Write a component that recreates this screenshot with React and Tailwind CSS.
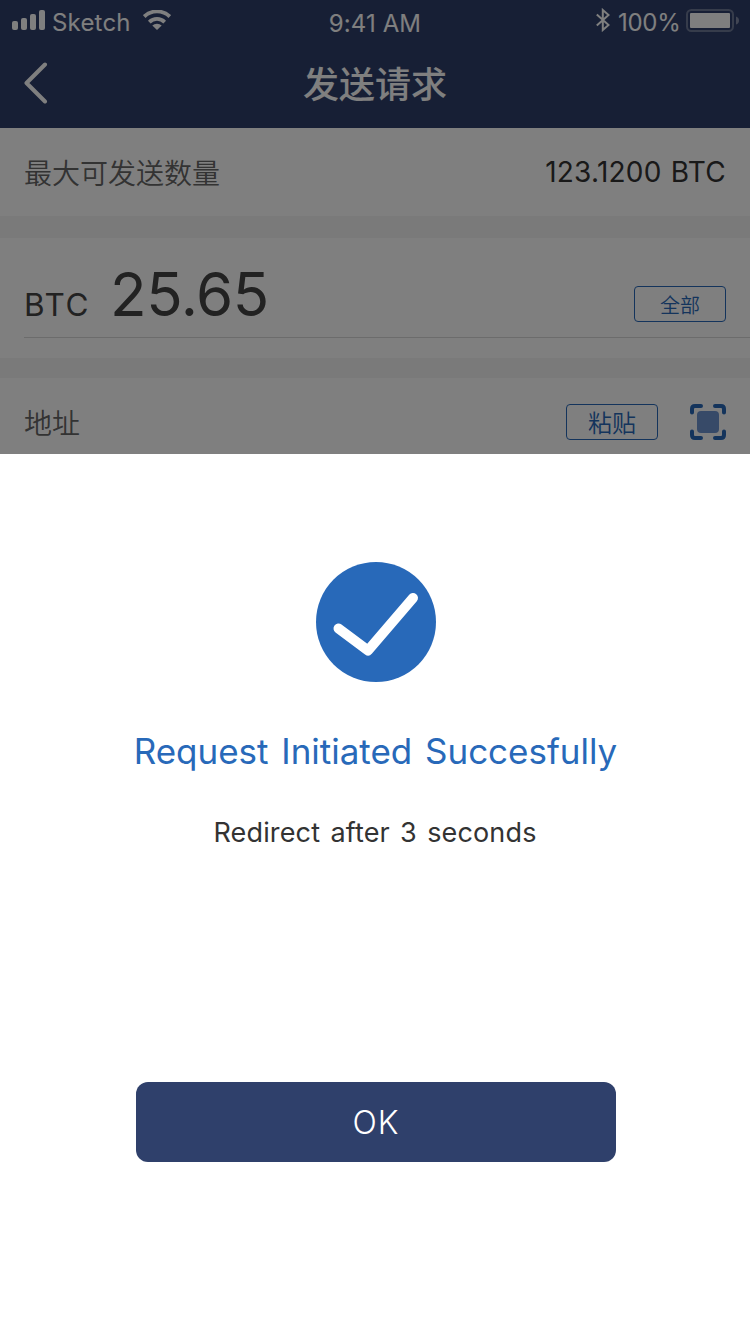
import React from "react";

const latin = "font-['Inter','Noto_Sans_CJK_SC',sans-serif]";
const cjk = "font-['Noto_Sans_CJK_SC',sans-serif]";

function StatusBar() {
  return (
    <div className="relative flex h-10 items-start text-white">
      <svg className="mt-[10px] ml-3 shrink-0" width="33" height="20" viewBox="0 0 33 20" fill="currentColor">
        <rect x="0" y="11" width="6" height="9" rx="2" />
        <rect x="9" y="8" width="6" height="12" rx="2" />
        <rect x="18" y="4" width="6" height="16" rx="2" />
        <rect x="27" y="0" width="6" height="20" rx="2" />
      </svg>
      <span className="ml-[7px] mt-[7px] w-[78px] text-[24px] leading-8 tracking-[0.2px]">Sketch</span>
      <svg className="ml-[13px] mt-[10px] shrink-0" width="28" height="20" viewBox="0 0 28 20" fill="none" stroke="currentColor" strokeWidth="3.8">
        <path d="M1.2 6.6 A18.4 18.4 0 0 1 26.8 6.6" />
        <path d="M6.3 12.1 A11 11 0 0 1 21.7 12.1" />
        <path d="M14 20 L9.3 15.6 A6.7 6.7 0 0 1 18.7 15.6 Z" fill="currentColor" stroke="none" />
      </svg>
      <span className="absolute inset-x-0 top-[8px] text-center text-[24px] leading-8 tracking-[0.1px]">9:41 AM</span>
      <div className="ml-auto flex items-start">
        <svg className="mt-[8px]" width="14" height="24" viewBox="0 0 14 24" fill="none" stroke="currentColor" strokeWidth="2">
          <path d="M0.8 6.5 L12.6 17 L6.8 22 V2 L12.6 7 L0.8 17.5" />
        </svg>
        <span className="ml-[8px] mt-[7px] w-[61px] text-[24px] leading-8 tracking-[-0.3px]">100%</span>
        <svg className="ml-[7px] mt-[9px] mr-[11px]" width="53" height="24" viewBox="0 0 53 24" fill="none">
          <rect x="1" y="1" width="46" height="21" rx="4.5" stroke="currentColor" strokeWidth="2" strokeOpacity="0.3" />
          <rect x="4" y="4" width="40" height="15" rx="1" fill="currentColor" />
          <path d="M50 7.5 Q53 8.5 53 11.5 Q53 14.5 50 15.5 Z" fill="currentColor" fillOpacity="0.4" />
        </svg>
      </div>
    </div>
  );
}

function Header() {
  return (
    <header className="h-32 bg-[#2f3f6b]">
      <StatusBar />
      <div className="flex h-[88px] items-center justify-between px-6 text-white">
        <svg className="-mt-[3px]" width="24" height="42" viewBox="0 0 24 42" fill="none" stroke="currentColor" strokeWidth="4" strokeLinecap="round" strokeLinejoin="round">
          <path d="M21 2.5 L2.5 21 L21 39.5" />
        </svg>
        <h1 className={`${cjk} -mt-[5px] text-[36px] leading-[48px] font-medium`}>发送请求</h1>
        <span className="w-6" />
      </div>
    </header>
  );
}

function OutlineButton({ children, className }) {
  return (
    <button className={`${cjk} flex h-9 w-[92px] items-center justify-center rounded-[4px] border border-[#2869b9] font-[350] text-[#2869b9] ${className}`}>
      {children}
    </button>
  );
}

function ScanIcon() {
  return (
    <svg width="36" height="36" viewBox="0 0 36 36" fill="none">
      <path
        d="M2 8.5 V5 Q2 2 5 2 H11 M25 2 H31 Q34 2 34 5 V8.5 M34 27.5 V31 Q34 34 31 34 H25 M11 34 H5 Q2 34 2 31 V27.5"
        stroke="#2869b9"
        strokeWidth="4"
        strokeLinecap="round"
      />
      <rect x="7" y="7" width="22" height="22" rx="4" fill="#6f95d0" />
    </svg>
  );
}

function SendForm() {
  return (
    <div className="relative h-[454px] overflow-hidden bg-[#f5f5f5]">
      <Header />
      <section className="flex h-[88px] items-center justify-between bg-white px-6">
        <span className={`${cjk} text-[28px] font-[350] text-[#666]`}>最大可发送数量</span>
        <span className="text-[28px] tracking-[0.25px] [word-spacing:1px] text-[#333]">123.1200 BTC</span>
      </section>
      <section className="mt-[22px] h-[120px] bg-white pl-6">
        <div className="flex h-[100px] justify-between border-b border-[#d8d8d8] pr-6">
          <div className="flex items-baseline text-[#444]">
            <span className="text-[31.5px] tracking-[1.6px]">BTC</span>
            <span className="ml-[20px] text-[60px] leading-[113px] tracking-[-0.4px]">25.65</span>
          </div>
          <OutlineButton className="mt-[48px] pt-[2px] text-[20px]">全部</OutlineButton>
        </div>
      </section>
      <section className="mt-5 flex h-[88px] items-center bg-white px-6">
        <span className={`${cjk} mr-auto text-[28px] font-[350] text-[#666]`}>地址</span>
        <OutlineButton className="mr-8 text-[24px]">粘贴</OutlineButton>
        <ScanIcon />
      </section>
      <div className="absolute inset-0 bg-black/50" />
    </div>
  );
}

function SuccessSheet() {
  return (
    <div className="flex h-[880px] flex-col items-center bg-white pt-[108px]">
      <svg className="ml-[2px]" width="120" height="120" viewBox="0 0 120 120">
        <circle cx="60" cy="60" r="60" fill="#2869b9" />
        <path d="M22.5 66.5 L52 88.5 L97 36" fill="none" stroke="#fff" strokeWidth="10" strokeLinecap="round" strokeLinejoin="round" />
      </svg>
      <h2 className="mt-[45px] ml-[1px] text-[35px] leading-[48px] tracking-[-0.02px] [word-spacing:3px] whitespace-nowrap text-[#2869b9]">Request Initiated Succesfully</h2>
      <p className="mt-[40px] text-[27px] leading-[36px] tracking-[0.15px] [word-spacing:2.5px] whitespace-nowrap text-[#333]">Redirect after 3 seconds</p>
      <button className="mt-[231px] ml-[2px] flex h-20 w-[480px] items-center justify-center rounded-[12px] bg-[#2f406b] pt-[2px] text-[32px] font-light tracking-[1px] text-white">
        OK
      </button>
    </div>
  );
}

export default function App() {
  return (
    <main className={`${latin} h-[1334px] w-[750px] overflow-hidden bg-white`}>
      <SendForm />
      <SuccessSheet />
    </main>
  );
}
